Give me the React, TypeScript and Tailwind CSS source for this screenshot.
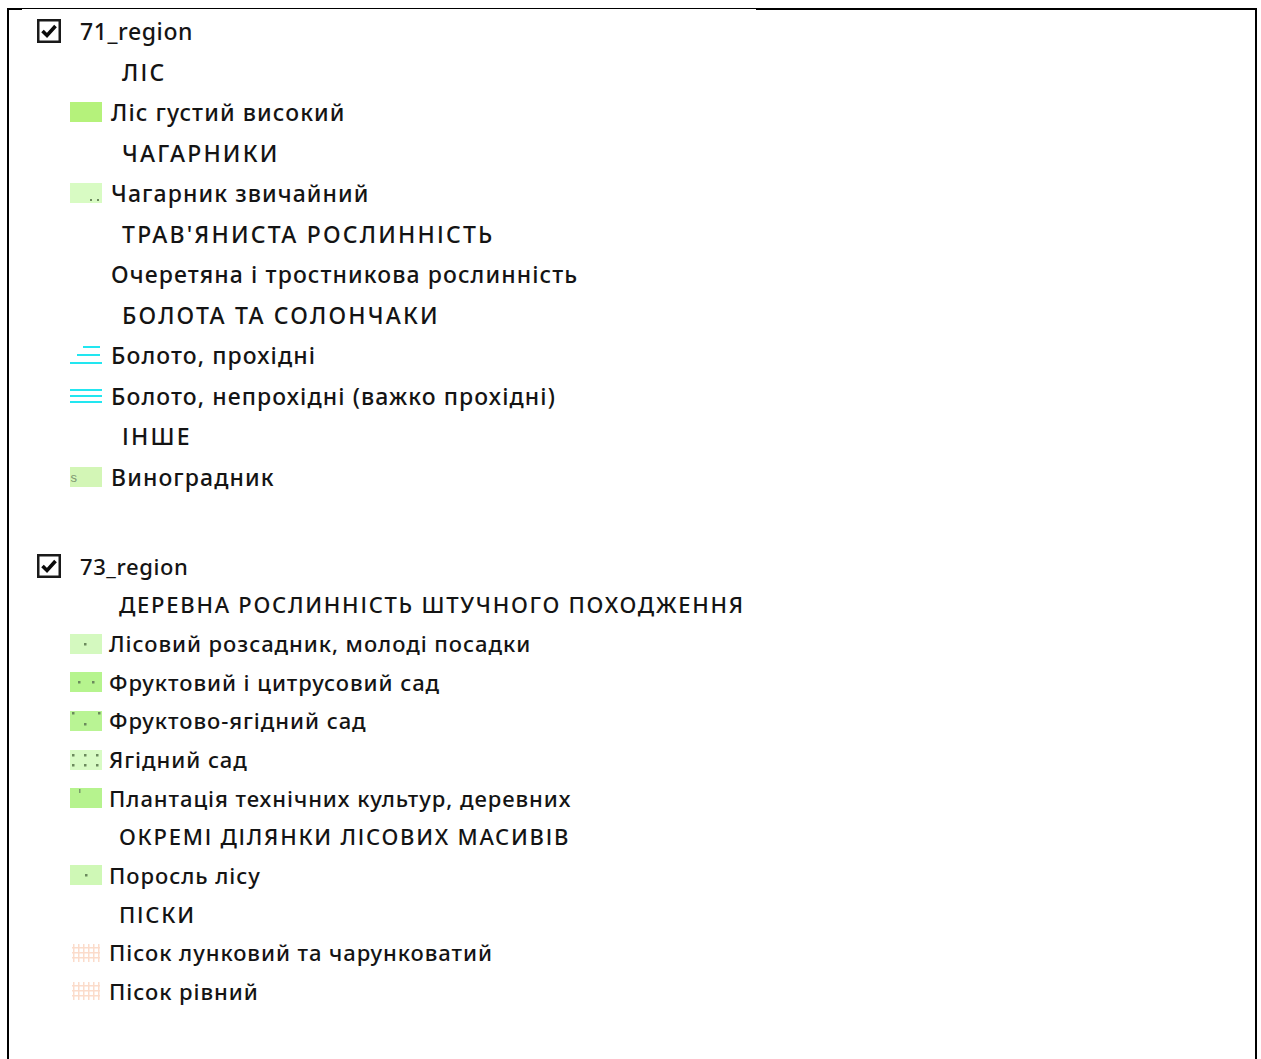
import React from "react";

type Row =
  | { kind: "title"; text: string }
  | { kind: "header"; text: string }
  | { kind: "item"; text: string; swatch?: React.ReactNode };

const DOT = "#6b8a5c";

const Solid = ({ fill }: { fill: string }) => (
  <svg width="32" height="20" viewBox="0 0 32 20">
    <rect width="32" height="20" fill={fill} />
  </svg>
);

const Shrub = () => (
  <svg width="32" height="20" viewBox="0 0 32 20">
    <rect width="32" height="20" fill="#d8fbc3" />
    <rect x="20" y="16" width="2" height="2" fill={DOT} />
    <rect x="27" y="16" width="2" height="2" fill={DOT} />
  </svg>
);

const SwampPassable = () => (
  <svg width="32" height="20" viewBox="0 0 32 20">
    <rect x="13" y="1" width="17" height="2" fill="#22e6f0" />
    <rect x="7" y="9" width="23" height="2" fill="#22e6f0" />
    <rect x="0" y="17" width="32" height="2" fill="#22e6f0" />
  </svg>
);

const SwampImpassable = () => (
  <svg width="32" height="20" viewBox="0 0 32 20">
    <rect x="0" y="3" width="32" height="2" fill="#22e6f0" />
    <rect x="0" y="9" width="32" height="2" fill="#22e6f0" />
    <rect x="0" y="15" width="32" height="2" fill="#22e6f0" />
  </svg>
);

const Vineyard = () => (
  <svg width="32" height="20" viewBox="0 0 32 20">
    <rect width="32" height="20" fill="#d3f6b6" />
    <text x="0.5" y="15" fontSize="13" fill="#7d9670" fontFamily="Liberation Sans, sans-serif">
      s
    </text>
  </svg>
);

const Dotted = ({ fill, dots }: { fill: string; dots: [number, number][] }) => (
  <svg width="32" height="20" viewBox="0 0 32 20">
    <rect width="32" height="20" fill={fill} />
    {dots.map(([x, y], i) => (
      <rect key={i} x={x} y={y} width="2.5" height="2.5" fill={DOT} />
    ))}
  </svg>
);

const Plantation = () => (
  <svg width="32" height="20" viewBox="0 0 32 20">
    <rect width="32" height="20" fill="#b6f38e" />
    <rect x="9" y="1" width="1.5" height="4" fill="#7a9a6a" />
  </svg>
);

const Sand = () => (
  <svg width="32" height="20" viewBox="0 0 32 20">
    {[3, 8, 13, 18, 23, 28].map((x) => (
      <rect key={x} x={x} y="1" width="1.5" height="18" fill="#fbdccb" />
    ))}
    {[4, 9, 14].map((y) => (
      <rect key={y} x="2" y={y} width="28" height="1.5" fill="#fbdccb" />
    ))}
  </svg>
);

const group1: Row[] = [
  { kind: "title", text: "71_region" },
  { kind: "header", text: "ЛІС" },
  { kind: "item", text: "Ліс густий високий", swatch: <Solid fill="#b5f27b" /> },
  { kind: "header", text: "ЧАГАРНИКИ" },
  { kind: "item", text: "Чагарник звичайний", swatch: <Shrub /> },
  { kind: "header", text: "ТРАВ'ЯНИСТА РОСЛИННІСТЬ" },
  { kind: "item", text: "Очеретяна і тростникова рослинність" },
  { kind: "header", text: "БОЛОТА ТА СОЛОНЧАКИ" },
  { kind: "item", text: "Болото, прохідні", swatch: <SwampPassable /> },
  { kind: "item", text: "Болото, непрохідні (важко прохідні)", swatch: <SwampImpassable /> },
  { kind: "header", text: "ІНШЕ" },
  { kind: "item", text: "Виноградник", swatch: <Vineyard /> },
];

const group2: Row[] = [
  { kind: "title", text: "73_region" },
  { kind: "header", text: "ДЕРЕВНА РОСЛИННІСТЬ ШТУЧНОГО ПОХОДЖЕННЯ" },
  {
    kind: "item",
    text: "Лісовий розсадник, молоді посадки",
    swatch: <Dotted fill="#d4f9bf" dots={[[14, 9]]} />,
  },
  {
    kind: "item",
    text: "Фруктовий і цитрусовий сад",
    swatch: <Dotted fill="#b6f48e" dots={[[8, 9], [22, 9]]} />,
  },
  {
    kind: "item",
    text: "Фруктово-ягідний сад",
    swatch: <Dotted fill="#b9f494" dots={[[2, 1], [28, 1], [14, 12]]} />,
  },
  {
    kind: "item",
    text: "Ягідний сад",
    swatch: (
      <Dotted
        fill="#d8fbc4"
        dots={[
          [2, 4],
          [14, 4],
          [26, 4],
          [2, 14],
          [14, 14],
          [26, 14],
        ]}
      />
    ),
  },
  { kind: "item", text: "Плантація технічних культур, деревних", swatch: <Plantation /> },
  { kind: "header", text: "ОКРЕМІ ДІЛЯНКИ ЛІСОВИХ МАСИВІВ" },
  { kind: "item", text: "Поросль лісу", swatch: <Dotted fill="#cff8b6" dots={[[15, 9]]} /> },
  { kind: "header", text: "ПІСКИ" },
  { kind: "item", text: "Пісок лунковий та чарунковатий", swatch: <Sand /> },
  { kind: "item", text: "Пісок рівний", swatch: <Sand /> },
];

const CheckBox = () => (
  <svg width="24" height="24" viewBox="0 0 24 24">
    <rect x="1.25" y="1.25" width="21.5" height="21.5" fill="#fff" stroke="#1a1a1a" strokeWidth="2.5" />
    <path d="M5.5 12 L10 16.5 L18.5 7" fill="none" stroke="#0a0a0a" strokeWidth="3.6" />
  </svg>
);

function Group({
  rows,
  rowH,
  headerCls,
  textCls,
}: {
  rows: Row[];
  rowH: string;
  headerCls: string;
  textCls: string;
}) {
  return (
    <div className="flex flex-col">
      {rows.map((r, i) => {
        if (r.kind === "title") {
          return (
            <div key={i} className={`flex items-center ${rowH} pl-[28px]`}>
              <CheckBox />
              <span className="ml-[19px] tracking-[0.6px]">{r.text}</span>
            </div>
          );
        }
        if (r.kind === "header") {
          return (
            <div key={i} className={`flex items-center ${rowH} ${headerCls}`}>
              {r.text}
            </div>
          );
        }
        return (
          <div key={i} className={`flex items-center ${rowH} pl-[61px]`}>
            <div className="w-[32px] h-[20px] shrink-0">{r.swatch}</div>
            <span className={textCls}>{r.text}</span>
          </div>
        );
      })}
    </div>
  );
}

export default function App() {
  return (
    <div className="w-[1261px] h-[1059px] bg-white pt-[8px] pl-[7px] overflow-hidden">
      <div className="w-[1250px] h-[1051px] flex flex-col">
        {/* frame top edge: heavier on both ends */}
        <div className="flex items-start shrink-0">
          <div className="w-[15px] h-[2px] bg-black" />
          <div className="w-[734px] h-px bg-black" />
          <div className="flex-1 h-[2px] bg-black" />
        </div>
        <div
          className="flex-1 border-l-2 border-r-2 border-black pt-[1px] text-[#141414] text-[23px] font-medium"
          style={{ fontFamily: "'Noto Sans', sans-serif" }}
        >
          <Group
            rows={group1}
            rowH="h-[40.5px]"
            headerCls="pl-[113px] tracking-[2.2px]"
            textCls="ml-[9px] tracking-[1.1px]"
          />
          <div className="h-[50px]" />
          <div className="text-[22px]">
            <Group
              rows={group2}
              rowH="h-[38.65px]"
              headerCls="pl-[110px] tracking-[1.75px]"
              textCls="ml-[7px] tracking-[0.95px]"
            />
          </div>
        </div>
      </div>
    </div>
  );
}
